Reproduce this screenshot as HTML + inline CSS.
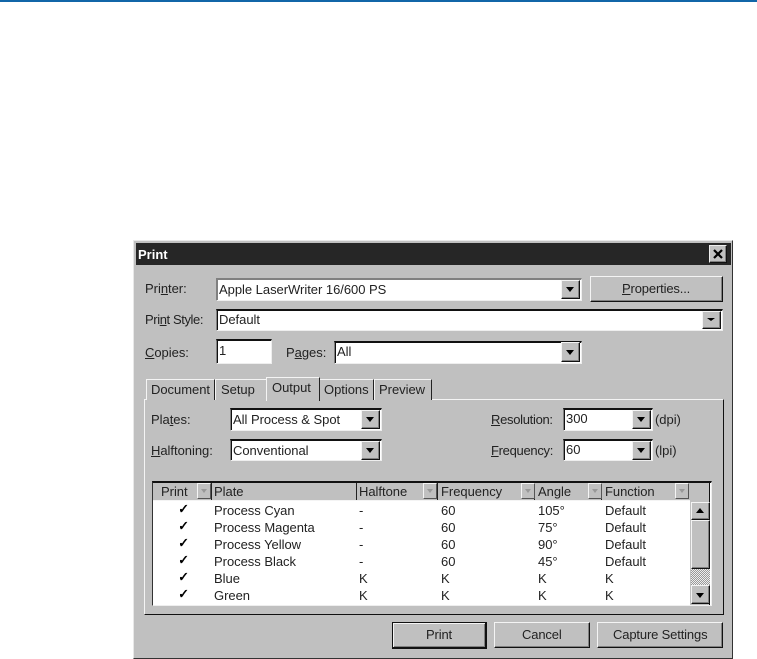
<!DOCTYPE html>
<html><head><meta charset="utf-8"><style>
html,body{margin:0;padding:0;background:#fff;width:757px;height:659px;overflow:hidden}
div,span.t{position:absolute;box-sizing:border-box}
.t{font:13px/14px "Liberation Sans",sans-serif;color:#222;white-space:nowrap;letter-spacing:-.03px}
u{text-decoration:underline}
.in{background:#fff;border-top:2px solid #111;border-left:1px solid #808080;border-right:1px solid #eee;border-bottom:1px solid #eee;box-shadow:inset 1px 0 #111}
.btn{background:#c0c0c0;border-top:1px solid #f4f4f4;border-left:1px solid #f4f4f4;border-right:1px solid #111;border-bottom:1px solid #111;box-shadow:inset -1px -1px #808080}
.btn .t{letter-spacing:-.15px}
.arr{width:0;height:0;border-left:4.5px solid transparent;border-right:4.5px solid transparent;border-top:5px solid #000}
.up{width:0;height:0;border-left:4.5px solid transparent;border-right:4.5px solid transparent;border-bottom:5px solid #000}
.sm{width:14px;height:16px;top:483px;background:#c0c0c0;border-top:1px solid #f4f4f4;border-left:1px solid #f4f4f4;border-right:1px solid #555;border-bottom:1px solid #555}
.sm:after{content:"";position:absolute;left:3px;top:5px;width:0;height:0;border-left:3.5px solid transparent;border-right:3.5px solid transparent;border-top:4px solid #999}
.c{font-weight:bold;font-size:13px;letter-spacing:0;font-family:"DejaVu Sans",sans-serif;color:#000;text-shadow:.6px 0 #000,0 .4px #000}
</style></head><body>
<div style="left:0;top:0;width:757px;height:2px;background:#1166a8"></div>

<div style="left:133px;top:240px;width:600px;height:419px;background:#c0c0c0;border-top:1px solid #e8e8e8;border-left:1px solid #e8e8e8;border-right:1px solid #333;border-bottom:1px solid #333"></div>
<div style="left:136px;top:243px;width:595px;height:22px;background:#262626"></div>
<span class="t" style="left:138px;top:248px;color:#fff;font-weight:bold;font-size:13px;letter-spacing:0">Print</span>
<div class="btn" style="left:709px;top:245px;width:18px;height:18px;border-top-color:#eee;border-left-color:#eee"><svg width="16" height="16" style="position:absolute;left:0;top:0"><path d="M4 4 12 12M12 4 4 12" stroke="#000" stroke-width="2.2"/></svg></div>

<span class="t" style="left:145px;top:282px">Pri<u>n</u>ter:</span>
<div class="in" style="left:216px;top:278px;width:366px;height:23px;border-top-color:#808080;box-shadow:inset 1px 0 #808080"></div>
<span class="t" style="left:219px;top:283px">Apple LaserWriter 16/600 PS</span>
<div class="btn" style="left:561px;top:280px;width:19px;height:19px"><div class="arr" style="left:4px;top:6px"></div></div>
<div class="btn" style="left:590px;top:276px;width:133px;height:26px"><span class="t" style="left:31px;top:5px"><u>P</u>roperties...</span></div>

<span class="t" style="left:145px;top:313px;letter-spacing:-.4px">Pri<u>n</u>t Style:</span>
<div class="in" style="left:216px;top:309px;width:507px;height:22px"></div>
<span class="t" style="left:219px;top:313px">Default</span>
<div class="btn" style="left:702px;top:311px;width:19px;height:18px"><div class="arr" style="left:4px;top:6px;border-left-width:4px;border-right-width:4px;border-top-width:3px"></div></div>

<span class="t" style="left:145px;top:346px"><u>C</u>opies:</span>
<div class="in" style="left:216px;top:339px;width:56px;height:25px"></div>
<span class="t" style="left:219px;top:344px">1</span>
<span class="t" style="left:286px;top:346px">P<u>a</u>ges:</span>
<div class="in" style="left:334px;top:341px;width:248px;height:23px"></div>
<span class="t" style="left:337px;top:345px">All</span>
<div class="btn" style="left:561px;top:342px;width:19px;height:20px"><div class="arr" style="left:4px;top:7px"></div></div>

<div style="left:144px;top:399px;width:580px;height:216px;border-top:1px solid #f4f4f4;border-left:1px solid #f4f4f4;border-right:1px solid #111;border-bottom:1px solid #111"></div>
<div style="left:146px;top:379px;width:69px;height:21px;background:#c0c0c0;border-top:1px solid #f4f4f4;border-left:1px solid #f4f4f4;border-right:1px solid #222"></div>
<div style="left:215px;top:379px;width:52px;height:21px;background:#c0c0c0;border-top:1px solid #f4f4f4;border-left:1px solid #f4f4f4"></div>
<div style="left:320px;top:379px;width:54px;height:21px;background:#c0c0c0;border-top:1px solid #f4f4f4;border-right:1px solid #222"></div>
<div style="left:374px;top:379px;width:58px;height:21px;background:#c0c0c0;border-top:1px solid #f4f4f4;border-right:1px solid #222;border-left:1px solid #f4f4f4"></div>
<div style="left:266px;top:377px;width:54px;height:24px;background:#c0c0c0;border-top:1px solid #f4f4f4;border-left:1px solid #f4f4f4;border-right:1px solid #222"></div>
<span class="t" style="left:151px;top:383px">Document</span>
<span class="t" style="left:221px;top:383px">Setup</span>
<span class="t" style="left:272px;top:381px">Output</span>
<span class="t" style="left:324px;top:383px">Options</span>
<span class="t" style="left:379px;top:383px">Preview</span>

<span class="t" style="left:151px;top:413px">Pla<u>t</u>es:</span>
<div class="in" style="left:230px;top:408px;width:152px;height:23px"></div>
<span class="t" style="left:233px;top:413px">All Process &amp; Spot</span>
<div class="btn" style="left:361px;top:410px;width:19px;height:19px"><div class="arr" style="left:4px;top:6px"></div></div>

<span class="t" style="left:151px;top:444px"><u>H</u>alftoning:</span>
<div class="in" style="left:230px;top:439px;width:152px;height:22px"></div>
<span class="t" style="left:233px;top:444px">Conventional</span>
<div class="btn" style="left:361px;top:441px;width:19px;height:19px"><div class="arr" style="left:4px;top:6px"></div></div>

<span class="t" style="left:491px;top:413px;letter-spacing:-.3px"><u>R</u>esolution:</span>
<div class="in" style="left:563px;top:408px;width:90px;height:23px"></div>
<span class="t" style="left:566px;top:412px">300</span>
<div class="btn" style="left:632px;top:410px;width:19px;height:19px"><div class="arr" style="left:4px;top:6px"></div></div>
<span class="t" style="left:655px;top:413px">(dpi)</span>

<span class="t" style="left:491px;top:444px;letter-spacing:-.3px"><u>F</u>requency:</span>
<div class="in" style="left:563px;top:439px;width:90px;height:22px"></div>
<span class="t" style="left:566px;top:443px">60</span>
<div class="btn" style="left:632px;top:441px;width:19px;height:19px"><div class="arr" style="left:4px;top:6px"></div></div>
<span class="t" style="left:655px;top:444px">(lpi)</span>

<div style="left:152px;top:481px;width:560px;height:125px;background:#fff;border-top:2px solid #111;border-left:1px solid #333;border-right:1px solid #eee;border-bottom:1px solid #eee"></div>
<div style="left:153px;top:483px;width:557px;height:17px;background:#c0c0c0"></div>
<div style="left:690px;top:483px;width:20px;height:122px;background:#c0c0c0;border-right:1px solid #111"></div>
<div style="left:153px;top:500px;width:537px;height:1px;background:#f4f4f4"></div>
<div style="left:211px;top:483px;width:1px;height:17px;background:#222"></div>
<div style="left:356px;top:483px;width:1px;height:17px;background:#222"></div>
<div style="left:437px;top:483px;width:1px;height:17px;background:#222"></div>
<div style="left:534px;top:483px;width:1px;height:17px;background:#222"></div>
<div style="left:601px;top:483px;width:1px;height:17px;background:#222"></div>
<div class="sm" style="left:197px"></div>
<div class="sm" style="left:423px"></div>
<div class="sm" style="left:521px"></div>
<div class="sm" style="left:588px"></div>
<div class="sm" style="left:675px"></div>
<span class="t" style="left:161px;top:485px">Print</span>
<span class="t" style="left:214px;top:485px">Plate</span>
<span class="t" style="left:359px;top:485px">Halftone</span>
<span class="t" style="left:441px;top:485px">Frequency</span>
<span class="t" style="left:538px;top:485px">Angle</span>
<span class="t" style="left:605px;top:485px">Function</span>

<span class="t c" style="left:178px;top:503px">✓</span>
<span class="t" style="left:214px;top:504px">Process Cyan</span><span class="t" style="left:359px;top:504px">-</span><span class="t" style="left:441px;top:504px">60</span><span class="t" style="left:538px;top:504px">105°</span><span class="t" style="left:605px;top:504px">Default</span>
<span class="t c" style="left:178px;top:520px">✓</span>
<span class="t" style="left:214px;top:521px">Process Magenta</span><span class="t" style="left:359px;top:521px">-</span><span class="t" style="left:441px;top:521px">60</span><span class="t" style="left:538px;top:521px">75°</span><span class="t" style="left:605px;top:521px">Default</span>
<span class="t c" style="left:178px;top:537px">✓</span>
<span class="t" style="left:214px;top:538px">Process Yellow</span><span class="t" style="left:359px;top:538px">-</span><span class="t" style="left:441px;top:538px">60</span><span class="t" style="left:538px;top:538px">90°</span><span class="t" style="left:605px;top:538px">Default</span>
<span class="t c" style="left:178px;top:554px">✓</span>
<span class="t" style="left:214px;top:555px">Process Black</span><span class="t" style="left:359px;top:555px">-</span><span class="t" style="left:441px;top:555px">60</span><span class="t" style="left:538px;top:555px">45°</span><span class="t" style="left:605px;top:555px">Default</span>
<span class="t c" style="left:178px;top:571px">✓</span>
<span class="t" style="left:214px;top:572px">Blue</span><span class="t" style="left:359px;top:572px">K</span><span class="t" style="left:441px;top:572px">K</span><span class="t" style="left:538px;top:572px">K</span><span class="t" style="left:605px;top:572px">K</span>
<span class="t c" style="left:178px;top:588px">✓</span>
<span class="t" style="left:214px;top:589px">Green</span><span class="t" style="left:359px;top:589px">K</span><span class="t" style="left:441px;top:589px">K</span><span class="t" style="left:538px;top:589px">K</span><span class="t" style="left:605px;top:589px">K</span>

<div class="btn" style="left:691px;top:502px;width:19px;height:18px"><div class="up" style="left:4px;top:5px"></div></div>
<div class="btn" style="left:691px;top:520px;width:19px;height:49px"></div>
<div style="left:691px;top:569px;width:19px;height:16px;background:repeating-conic-gradient(#999 0 25%,#eee 0 50%) 0 0/2px 2px"></div>
<div class="btn" style="left:691px;top:585px;width:19px;height:19px"><div class="arr" style="left:4px;top:7px"></div></div>

<div class="btn" style="left:392px;top:622px;width:95px;height:27px;border-top:1px solid #111;border-left:1px solid #111;border-right:2px solid #111;border-bottom:2px solid #111;box-shadow:inset 1px 1px #f4f4f4,inset -1px -1px #808080"><span class="t" style="left:33px;top:5px">Print</span></div>
<div class="btn" style="left:494px;top:622px;width:96px;height:26px"><span class="t" style="left:27px;top:5px">Cancel</span></div>
<div class="btn" style="left:597px;top:622px;width:126px;height:26px"><span class="t" style="left:15px;top:5px">Capture Settings</span></div>
</body></html>
